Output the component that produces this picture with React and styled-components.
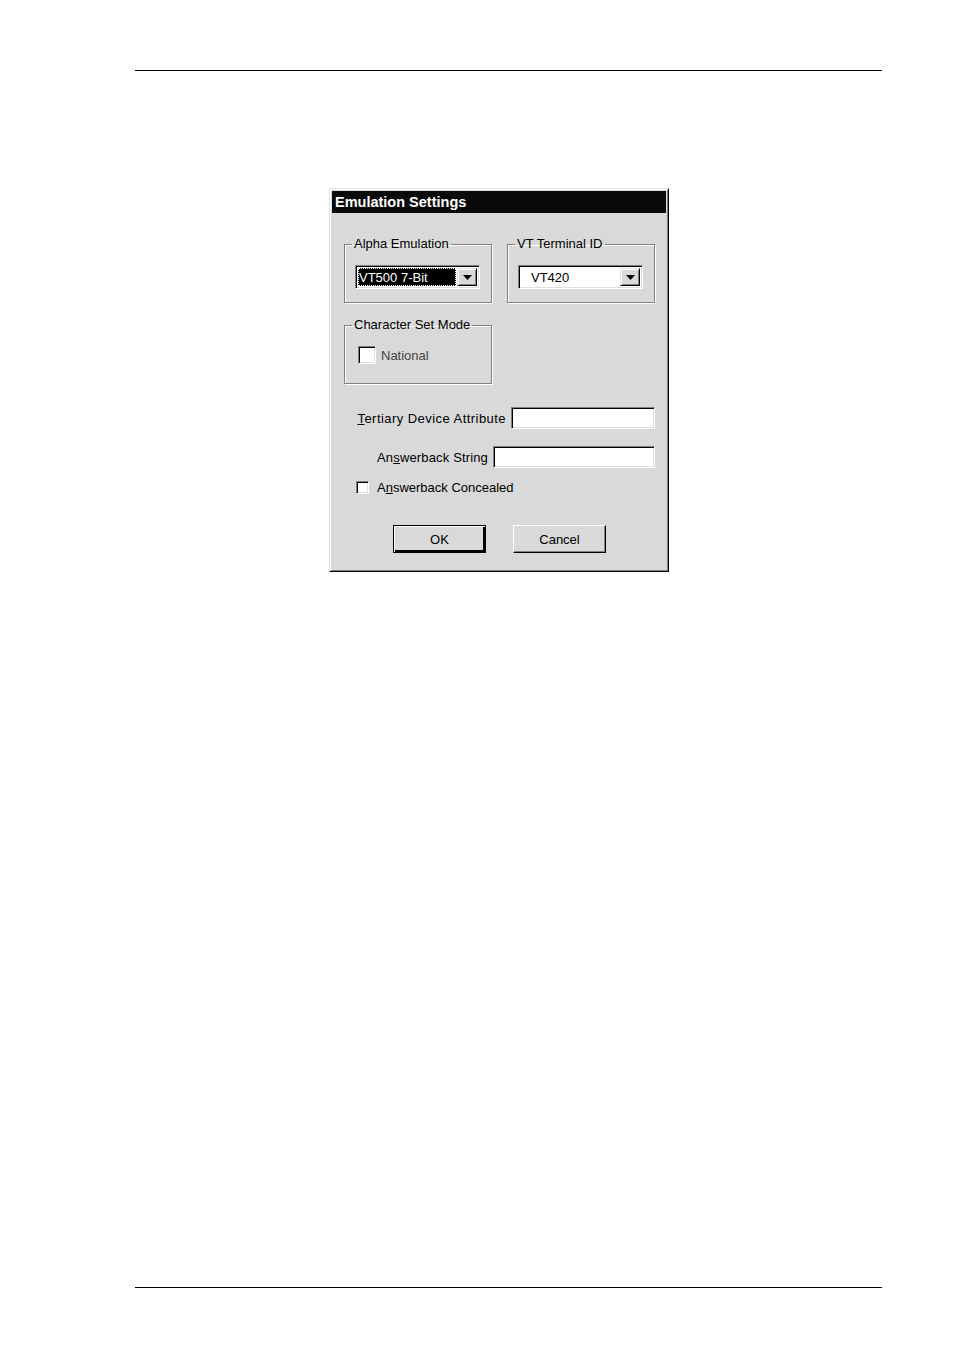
import React from "react";
import styled, { createGlobalStyle } from "styled-components";

const Global = createGlobalStyle`
  html, body {
    margin: 0;
    padding: 0;
    background: #fff;
  }
  body {
    font-family: "Liberation Sans", Arial, sans-serif;
    color: #000;
  }
`;

const Page = styled.div`
  width: 954px;
  height: 1352px;
  box-sizing: border-box;
  padding: 70px 72px 0 135px;
  display: flex;
  flex-direction: column;
`;

const Rule = styled.div`
  width: 747px;
  border-top: 1px solid #000;
`;

const Figure = styled.div`
  margin: 117px 0 0 194px;
  flex: 1;
`;

const Dialog = styled.div`
  width: 340px;
  height: 384px;
  box-sizing: border-box;
  background: #d9d9d9;
  border: 1px solid;
  border-color: #e0e0e0 #000 #000 #e0e0e0;
  box-shadow: inset 1px 1px 0 #fff, inset -1px -1px 0 #808080;
  padding: 2px;
  display: flex;
  flex-direction: column;
`;

const TitleBar = styled.div`
  height: 22px;
  background: #0a0a0a;
  color: #fff;
  font-weight: bold;
  font-size: 14.5px;
  line-height: 22px;
  padding-left: 3px;
  white-space: nowrap;
`;

const Body = styled.div`
  padding: 24px 11px 0 12px;
  display: flex;
  flex-direction: column;
  font-size: 13px;
`;

const GroupRow = styled.div`
  display: flex;
  gap: 15px;
  margin-top: ${(p) => p.$mt || 0}px;
`;

const Group = styled.fieldset`
  width: 148px;
  height: 66px;
  box-sizing: border-box;
  margin: 0;
  padding: 14px 0 0 ${(p) => p.$pl || 10}px;
  border: 1px solid #808080;
  box-shadow: 1px 1px 0 #fff, inset 1px 1px 0 #fff;
  min-width: 0;
`;

const Legend = styled.legend`
  font-size: 13px;
  line-height: 14px;
  padding: 0 2px;
  margin-left: ${(p) => 7 - (p.$pl || 10)}px;
`;

const Combo = styled.div`
  width: 125px;
  height: 24px;
  box-sizing: border-box;
  background: #fff;
  border: 1px solid;
  border-color: #808080 #fff #fff #808080;
  box-shadow: inset 1px 1px 0 #000, inset -1px -1px 0 #dfdfdf;
  padding: 2px;
  display: flex;
  align-items: stretch;
`;

const ComboText = styled.div`
  flex: 1;
  display: flex;
  align-items: center;
  margin-right: 1px;
  padding-left: ${(p) => (p.$selected ? 1 : 10)}px;
  background: ${(p) => (p.$selected ? "#000" : "transparent")};
  color: ${(p) => (p.$selected ? "#fff" : "#000")};
  outline: ${(p) => (p.$selected ? "1px dotted #fff" : "none")};
  outline-offset: -1px;
  font-size: 13px;
  white-space: nowrap;
`;

const DropButton = styled.div`
  width: 20px;
  box-sizing: border-box;
  background: #d9d9d9;
  border: 1px solid;
  border-color: #e0e0e0 #000 #000 #e0e0e0;
  box-shadow: inset 1px 1px 0 #fff, inset -1px -1px 0 #808080;
  display: flex;
  align-items: center;
  justify-content: center;
`;

const CheckRow = styled.label`
  display: flex;
  align-items: center;
  gap: ${(p) => p.$gap || 6}px;
  color: ${(p) => p.$color || "#000"};
  font-size: 13px;
  margin-left: ${(p) => p.$ml || 0}px;
  margin-top: ${(p) => p.$mt || 0}px;
`;

const CheckBox = styled.span`
  width: ${(p) => p.$size}px;
  height: ${(p) => p.$size}px;
  box-sizing: border-box;
  background: #fff;
  border: 1px solid;
  border-color: #808080 #fff #fff #808080;
  box-shadow: inset 1px 1px 0 #000, inset -1px -1px 0 #dfdfdf;
  flex: none;
`;

const FieldRow = styled.div`
  display: flex;
  justify-content: flex-end;
  align-items: center;
  gap: 5px;
  margin-top: ${(p) => p.$mt}px;
`;

const FieldLabel = styled.span`
  letter-spacing: ${(p) => p.$ls || 0}px;
`;

const Input = styled.div`
  width: ${(p) => p.$w}px;
  height: 22px;
  box-sizing: border-box;
  background: #fff;
  border: 1px solid;
  border-color: #808080 #fff #fff #808080;
  box-shadow: inset 1px 1px 0 #000, inset -1px -1px 0 #dfdfdf;
`;

const Buttons = styled.div`
  display: flex;
  justify-content: center;
  gap: 27px;
  margin-top: 30px;
`;

const Button = styled.div`
  width: 93px;
  height: 28px;
  box-sizing: border-box;
  background: #d9d9d9;
  border: 1px solid;
  border-color: ${(p) => (p.$default ? "#000" : "#fff #000 #000 #fff")};
  box-shadow: ${(p) =>
    p.$default
      ? "inset 1px 1px 0 #fff, inset -2px -2px 0 #000, inset -1px -1px 0 #808080"
      : "inset -1px -1px 0 #808080"};
  display: flex;
  align-items: center;
  justify-content: center;
  font-size: 13px;
`;

const Arrow = () => (
  <svg width="9" height="5" viewBox="0 0 9 5">
    <path d="M0 0h9L4.5 5z" fill="#000" />
  </svg>
);

export default function App() {
  return (
    <>
      <Global />
      <Page>
        <Rule />
        <Figure>
          <Dialog>
            <TitleBar>Emulation Settings</TitleBar>
            <Body>
              <GroupRow>
                <Group>
                  <Legend>Alpha Emulation</Legend>
                  <Combo>
                    <ComboText $selected>VT500 7-Bit</ComboText>
                    <DropButton>
                      <Arrow />
                    </DropButton>
                  </Combo>
                </Group>
                <Group>
                  <Legend>VT Terminal ID</Legend>
                  <Combo>
                    <ComboText>VT420</ComboText>
                    <DropButton>
                      <Arrow />
                    </DropButton>
                  </Combo>
                </Group>
              </GroupRow>
              <GroupRow $mt={15}>
                <Group $pl={13}>
                  <Legend $pl={13}>Character Set Mode</Legend>
                  <CheckRow $gap={5} $color="#444">
                    <CheckBox $size={18} />
                    National
                  </CheckRow>
                </Group>
              </GroupRow>
              <FieldRow $mt={23}>
                <FieldLabel $ls={0.45}>
                  <u>T</u>ertiary Device Attribute
                </FieldLabel>
                <Input $w={144} />
              </FieldRow>
              <FieldRow $mt={17}>
                <FieldLabel $ls={0.15}>
                  An<u>s</u>werback String
                </FieldLabel>
                <Input $w={162} />
              </FieldRow>
              <CheckRow $gap={8} $ml={12} $mt={12}>
                <CheckBox $size={13} />
                <span>
                  A<u>n</u>swerback Concealed
                </span>
              </CheckRow>
              <Buttons>
                <Button $default>OK</Button>
                <Button>Cancel</Button>
              </Buttons>
            </Body>
          </Dialog>
        </Figure>
        <Rule />
        <div style={{ height: 64 }} />
      </Page>
    </>
  );
}
